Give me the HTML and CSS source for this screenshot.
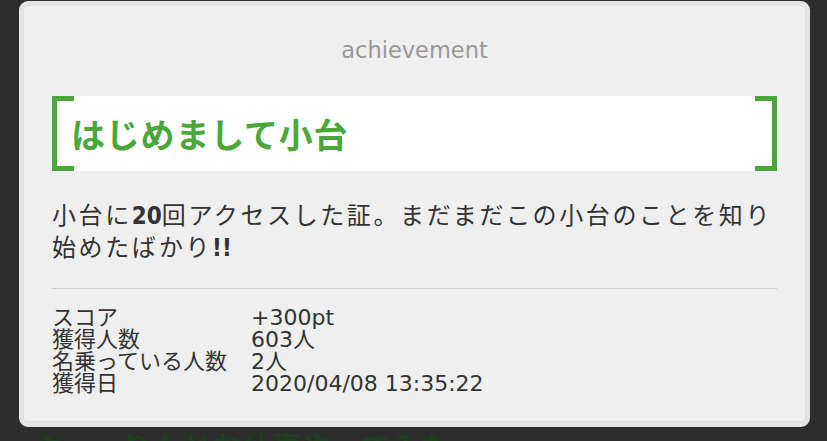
FILE: index.html
```html
<!DOCTYPE html>
<html lang="ja">
<head>
  <meta charset="UTF-8">
  <meta name="viewport" content="width=device-width, initial-scale=1.0">
  <title>achievement</title>
  <link rel="stylesheet" href="styles.css">
</head>
<body>
  <div class="card">
    <div class="kind">achievement</div>
    <h1 class="name">はじめまして小台</h1>
    <p class="desc">小台に<span class="num">20</span>回アクセスした証。まだまだこの小台のことを知り<br>始めたばかり<span class="num">!!</span></p>
    <hr class="line">
    <dl class="stats">
      <dt>スコア</dt><dd class="val">+300pt</dd>
      <dt>獲得人数</dt><dd class="val">603人</dd>
      <dt>名乗っている人数</dt><dd class="val">2人</dd>
      <dt>獲得日</dt><dd class="val">2020/04/08 13:35:22</dd>
    </dl>
  </div>
  <div class="next">
    <svg class="next-icon" width="22" height="14" viewBox="0 0 22 14">
      <path d="M3 2 L8 6 L6 7 L14 10 L20 8" fill="none" stroke="#1f3f1f" stroke-width="3"/>
    </svg>
    <span>りんとお仕事やってみた</span>
  </div>
</body>
</html>
```

FILE: styles.css
```css
body {
  margin: 0;
  background: #2d2d2d;
  font-family: "Noto Sans CJK JP", sans-serif;
  height: 441px;
  overflow: hidden;
}

.card {
  box-sizing: border-box;
  width: 791px;
  height: 426px;
  margin: 1px 0 0 19px;
  padding: 25px 29px 0;
  background: #efefef;
  border: 4px solid #e4e4e4;
  border-bottom-width: 5px;
  border-radius: 9px;
  box-shadow: inset 0 0 0 1px #dcdcdc;
  color: #333;
}

.num {
  font-family: "DejaVu Sans", sans-serif;
  font-stretch: condensed;
}

.kind {
  font-family: "DejaVu Sans", sans-serif;
  font-size: 22.5px;
  line-height: 40px;
  text-align: center;
  color: #999;
  margin-bottom: 26px;
}

.name {
  position: relative;
  margin: 0;
  height: 75px;
  padding-left: 19px;
  background: #fff;
  color: #4aa83a;
  font-size: 34px;
  font-weight: bold;
  line-height: 75px;
  letter-spacing: 0.8px;
}

.name::before,
.name::after {
  content: "";
  position: absolute;
  top: 0;
  bottom: 0;
  width: 17px;
  border: 5px solid #4aa83a;
}

.name::before {
  left: 0;
  border-right: none;
}

.name::after {
  right: 0;
  border-left: none;
}

.desc {
  margin: 28px 0 0;
  font-size: 24px;
  line-height: 30px;
  letter-spacing: 2.6px;
  white-space: nowrap;
}

.desc .num {
  font-weight: bold;
  letter-spacing: 0;
}

.line {
  margin: 25px 0 0;
  border: none;
  border-top: 1px solid #cfcfcf;
}

.stats {
  display: grid;
  grid-template-columns: 199px 1fr;
  grid-auto-rows: 22px;
  align-items: baseline;
  margin: 15px 0 0;
  font-size: 22px;
  line-height: 22px;
}

.stats dt,
.stats dd {
  margin: 0;
}

.stats .val {
  font-family: "DejaVu Sans", "Noto Sans CJK JP", sans-serif;
}

.next {
  display: flex;
  align-items: flex-start;
  gap: 60px;
  margin: 3px 0 0 40px;
  color: #1f3f1f;
  font-size: 30px;
  font-weight: bold;
  line-height: 30px;
}

.next-icon {
  margin-top: 2px;
}
```
